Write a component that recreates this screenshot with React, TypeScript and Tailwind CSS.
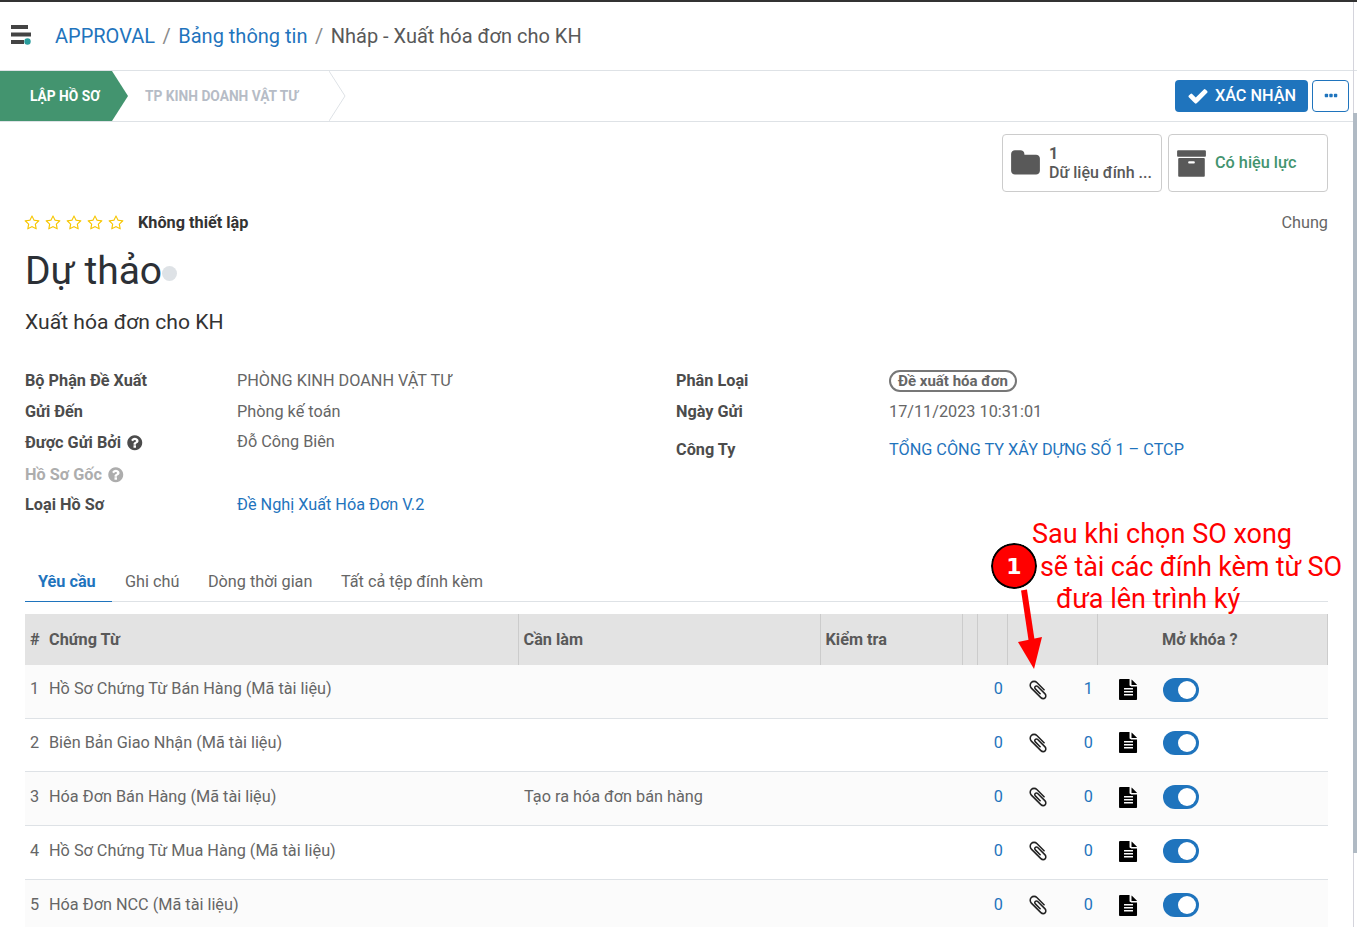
const ROWS = [
  { no: 1, name: "Hồ Sơ Chứng Từ Bán Hàng (Mã tài liệu)", todo: "", count: 1 },
  { no: 2, name: "Biên Bản Giao Nhận (Mã tài liệu)", todo: "", count: 0 },
  { no: 3, name: "Hóa Đơn Bán Hàng (Mã tài liệu)", todo: "Tạo ra hóa đơn bán hàng", count: 0 },
  { no: 4, name: "Hồ Sơ Chứng Từ Mua Hàng (Mã tài liệu)", todo: "", count: 0 },
  { no: 5, name: "Hóa Đơn NCC (Mã tài liệu)", todo: "", count: 0 },
];

// Font Awesome 4 glyphs, the set the page itself uses
const ICONS = {
  check: "M1671 566q0 40-28 68l-724 724-136 136q-28 28-68 28t-68-28l-136-136-362-362q-28-28-28-68t28-68l136-136q28-28 68-28t68 28l294 295 656-657q28-28 68-28t68 28l136 136q28 28 28 68z",
  dots: "M576 736v192q0 40-28 68t-68 28h-192q-40 0-68-28t-28-68v-192q0-40 28-68t68-28h192q40 0 68 28t28 68zm512 0v192q0 40-28 68t-68 28h-192q-40 0-68-28t-28-68v-192q0-40 28-68t68-28h192q40 0 68 28t28 68zm512 0v192q0 40-28 68t-68 28h-192q-40 0-68-28t-28-68v-192q0-40 28-68t68-28h192q40 0 68 28t28 68z",
  folder: "M1728 608v704q0 92-66 158t-158 66h-1216q-92 0-158-66t-66-158v-960q0-92 66-158t158-66h320q92 0 158 66t66 158v32h672q92 0 158 66t66 158z",
  archive: "M1088 832q0-26-19-45t-45-19h-256q-26 0-45 19t-19 45 19 45 45 19h256q26 0 45-19t19-45zm576-192v960q0 26-19 45t-45 19h-1408q-26 0-45-19t-19-45v-960q0-26 19-45t45-19h1408q26 0 45 19t19 45zm64-448v256q0 26-19 45t-45 19h-1536q-26 0-45-19t-19-45v-256q0-26 19-45t45-19h1536q26 0 45 19t19 45z",
  star: "M1201 1004l306-297-422-62-189-382-189 382-422 62 306 297-73 421 378-199 377 199zm527-357q0 22-26 48l-363 354 86 500q1 7 1 20 0 50-41 50-19 0-40-12l-449-236-449 236q-22 12-40 12-21 0-31.500-14.500t-10.500-35.500q0-6 2-20l86-500-364-354q-25-27-25-48 0-37 56-46l502-73 225-455q19-41 49-41t49 41l225 455 502 73q56 9 56 46z",
  help: "M1024 1376v-192q0-14-9-23t-23-9h-192q-14 0-23 9t-9 23v192q0 14 9 23t23 9h192q14 0 23-9t9-23zm256-672q0-88-55.500-163t-138.500-116-170-41q-243 0-371 213-15 24 8 42l132 100q7 6 19 6 16 0 25-12 53-68 86-92 34-24 86-24 48 0 85.500 26t37.500 59q0 38-20 61t-68 45q-63 28-115.500 86.500t-52.500 125.500v36q0 14 9 23t23 9h192q14 0 23-9t9-23q0-19 21.500-49.500t54.500-49.500q32-18 49-28.500t46-35 44.500-48 28-60.500 12.500-81zm384 192q0 209-103 385.500t-279.500 279.500-385.500 103-385.500-103-279.500-279.500-103-385.500 103-385.500 279.500-279.500 385.500-103 385.500 103 279.500 279.500 103 385.500z",
  clip: "M1596 1385q0 117-79 196t-196 79q-135 0-235-100l-777-776q-113-115-113-271 0-159 110-270t269-111q158 0 273 113l605 606q10 10 10 22 0 16-30.500 46.500t-46.500 30.500q-13 0-23-10l-606-607q-79-77-181-77-106 0-179 75t-73 181q0 105 76 181l776 777q63 63 145 63 64 0 106-42t42-106q0-82-63-145l-581-581q-26-24-60-24-29 0-48 19t-19 48q0 32 25 59l410 410q10 10 10 22 0 16-31 47t-47 31q-12 0-22-10l-410-410q-63-61-63-149 0-82 57-139t139-57q88 0 149 63l581 581q100 98 100 235z",
  file: "M1596 476q14 14 28 36h-472v-472q22 14 36 28zm-476 164h504v1056q0 40-28 68t-68 28h-1344q-40 0-68-28t-28-68v-1600q0-40 28-68t68-28h800v504q0 40 28 68t68 28zm160 736v-64q0-14-9-23t-23-9h-704q-14 0-23 9t-9 23v64q0 14 9 23t23 9h704q14 0 23-9t9-23zm0-256v-64q0-14-9-23t-23-9h-704q-14 0-23 9t-9 23v64q0 14 9 23t23 9h704q14 0 23-9t9-23zm0-256v-64q0-14-9-23t-23-9h-704q-14 0-23 9t-9 23v64q0 14 9 23t23 9h704q14 0 23-9t9-23z",
};

function Icon({ name, size, className }: { name: keyof typeof ICONS; size: number; className?: string }) {
  return (
    <svg width={size} height={size} viewBox="0 0 1792 1792" fill="currentColor" className={className}>
      <path d={ICONS[name]} />
    </svg>
  );
}

function Label({ children, help, faded }: { children: React.ReactNode; help?: boolean; faded?: boolean }) {
  return (
    <div className={`flex items-center gap-[5px] font-bold ${faded ? "text-[#adadad]" : "text-[#4c4c4c]"}`}>
      {children}
      {help && <Icon name="help" size={17.5} />}
    </div>
  );
}

function Toggle() {
  return (
    <div className="flex h-6 w-9 items-center justify-end rounded-full bg-[#1f74bd] pr-[3px]">
      <div className="h-[18px] w-[18px] rounded-full bg-white" />
    </div>
  );
}

export default function App() {
  return (
    <div className="relative h-[927px] overflow-hidden border-t-2 border-[#333] bg-white font-['Roboto',sans-serif] text-[16.25px] text-[#666]">
      <header className="flex h-[69px] items-center border-b border-[#dee2e6] pl-[11px]">
        <svg width="21" height="20" viewBox="0 0 21 20" className="mb-[3px]">
          <rect x="0" y="0" width="17" height="4" fill="#444" />
          <rect x="0" y="7.500" width="20" height="4" fill="#444" />
          <rect x="0" y="15" width="13" height="4" fill="#444" />
          <circle cx="16.500" cy="16.500" r="3.200" fill="#2a9d9d" />
        </svg>
        <nav className="ml-[23px] flex items-center text-xl text-[#595959]">
          <span className="text-[#1f74bd]">APPROVAL</span>
          <span className="mx-[7.500px] text-[#8a8a8a]">/</span>
          <span className="text-[#1f74bd]">Bảng thông tin</span>
          <span className="mx-[7.500px] text-[#8a8a8a]">/</span>
          <span>Nháp - Xuất hóa đơn cho KH</span>
        </nav>
      </header>

      <div className="flex h-[51px] items-center justify-between border-b border-[#dee2e6] pr-2">
        <div className="flex h-full items-center text-[13.750px] font-bold">
          <div className="flex h-full w-[128px] items-center bg-[#43946f] pl-[30px] text-white [clip-path:polygon(0_0,112px_0,100%_50%,112px_100%,0_100%)]">
            LẬP HỒ SƠ
          </div>
          <div className="-ml-[2px] flex h-full w-[220px] items-center pl-[19px] text-[#b6bcc6] [clip-path:polygon(0_0,204px_0,100%_50%,204px_100%,0_100%)]">
            TP KINH DOANH VẬT TƯ
          </div>
          <svg width="17" height="50" viewBox="0 0 17 50" className="-ml-[17px]">
            <path d="M0 0 L16 25 L0 50" fill="none" stroke="#dee2e6" />
          </svg>
        </div>
        <div className="flex items-center gap-1">
          <button className="flex h-8 w-[133px] items-center justify-center gap-[6px] rounded bg-[#1f74bd] font-medium text-white">
            <Icon name="check" size={22} />
            XÁC NHẬN
          </button>
          <button className="flex h-8 w-[37px] items-center justify-center rounded border border-[#1f74bd] text-[#1f74bd]">
            <Icon name="dots" size={16} />
          </button>
        </div>
      </div>

      <main className="px-[25px]">
        <div className="flex justify-end gap-[6px] pr-[4px] pt-3">
          <div className="flex h-[58px] w-40 items-center gap-2 rounded border border-[#ccc] pl-[7px] text-base font-medium leading-[19px] text-[#595959]">
            <Icon name="folder" size={31} />
            <div>
              <div className="font-bold">1</div>
              <div>Dữ liệu đính ...</div>
            </div>
          </div>
          <div className="flex h-[58px] w-40 items-center gap-2 rounded border border-[#ccc] pl-[7px] font-medium text-[#43946f]">
            <Icon name="archive" size={31} className="text-[#595959]" />
            Có hiệu lực
          </div>
        </div>

        <div className="mt-[19px] flex items-center justify-between pr-[4px]">
          <div className="flex items-center">
            <div className="-ml-px flex gap-[5px] text-[#f7c600]">
              {[0, 1, 2, 3, 4].map((i) => (
                <Icon key={i} name="star" size={16} />
              ))}
            </div>
            <span className="ml-[14px] font-bold text-[#333]">Không thiết lập</span>
          </div>
          <span>Chung</span>
        </div>

        <div className="mt-[8px] flex items-center">
          <h1 className="text-[39px] leading-[56px] text-[#2c3036]">Dự thảo</h1>
          <span className="mt-1 h-[15px] w-[15px] rounded-full bg-[#dee2e6]" />
        </div>
        <div className="mt-[9px] text-[21.125px] leading-7 text-[#333]">Xuất hóa đơn cho KH</div>

        <div className="mt-[29px] grid grid-cols-[212px_439px_213px_1fr]">
          <div className="flex h-[31px] items-center"><Label>Bộ Phận Đề Xuất</Label></div>
          <div className="flex h-[31px] items-center">PHÒNG KINH DOANH VẬT TƯ</div>
          <div className="flex h-[31px] items-center"><Label>Phân Loại</Label></div>
          <div className="flex h-[31px] items-center">
            <span className="rounded-full border-2 border-[#777] px-[7px] text-[15px] font-bold leading-[18px] text-[#666]">Đề xuất hóa đơn</span>
          </div>

          <div className="flex h-[31px] items-center"><Label>Gửi Đến</Label></div>
          <div className="flex h-[31px] items-center">Phòng kế toán</div>
          <div className="flex h-[31px] items-center"><Label>Ngày Gửi</Label></div>
          <div className="flex h-[31px] items-center">17/11/2023 10:31:01</div>

          <div className="flex h-[31px] items-center"><Label help>Được Gửi Bởi</Label></div>
          <div className="flex h-[31px] items-center pb-[2px]">Đỗ Công Biên</div>
          <div className="row-span-2 flex h-[45px] items-center"><Label>Công Ty</Label></div>
          <div className="row-span-2 flex h-[45px] items-center text-[#1f74bd]">TỔNG CÔNG TY XÂY DỰNG SỐ 1 – CTCP</div>

          <div className="flex h-[31px] items-center pt-[2px]"><Label help faded>Hồ Sơ Gốc</Label></div>
          <div />

          <div className="flex h-[31px] items-center"><Label>Loại Hồ Sơ</Label></div>
          <div className="flex h-[31px] items-center text-[#1f74bd]">Đề Nghị Xuất Hóa Đơn V.2</div>
        </div>

        <div className="mt-[42px] flex h-10 w-[1303px] border-b border-[#dee2e6]">
          <div className="-mb-px flex w-[87px] items-center border-b border-[#1f74bd] pl-[13px] font-bold text-[#1f74bd]">Yêu cầu</div>
          <div className="flex items-center pl-[13px]">Ghi chú</div>
          <div className="flex items-center pl-[28.500px]">Dòng thời gian</div>
          <div className="flex items-center pl-[28.500px]">Tất cả tệp đính kèm</div>
        </div>

        <table className="mt-3 w-[1303px] table-fixed border-collapse">
          <colgroup>
            <col className="w-[18px]" />
            <col className="w-[475px]" />
            <col className="w-[302px]" />
            <col className="w-[142px]" />
            <col className="w-[15px]" />
            <col className="w-[30px]" />
            <col className="w-[90px]" />
            <col className="w-[231px]" />
          </colgroup>
          <thead>
            <tr className="h-[51px] bg-[#e3e3e3] text-left font-bold text-[#595959]">
              <th className="pl-[5px]">#</th>
              <th className="pl-[6px]">Chứng Từ</th>
              <th className="border-l border-[#ccc] pl-[5px]">Cần làm</th>
              <th className="border-l border-[#ccc] pl-[5px]">Kiểm tra</th>
              <th className="border-l border-[#ccc]" />
              <th className="border-l border-[#ccc]" />
              <th className="border-l border-[#ccc]" />
              <th className="border-l border-[#ccc] pr-[26px] text-center shadow-[inset_-1px_0_0_#ccc]">Mở khóa ?</th>
            </tr>
          </thead>
          <tbody>
            {ROWS.map((row) => (
              <tr
                key={row.no}
                className={`border-b border-[#dee2e6] ${row.no < 3 ? "h-[53px] [&>td]:pb-[4px]" : "h-[54px] [&>td]:pb-[2px]"} ${row.no % 2 ? "bg-[#fbfbfb]" : "bg-white"}`}
              >
                <td className="pl-[5px]">{row.no}</td>
                <td className="pl-[6px]">{row.name}</td>
                <td className="pl-[6px]">{row.todo}</td>
                <td />
                <td />
                <td className="pr-[4px] text-right text-[#1f74bd]">0</td>
                <td className="text-[#1f74bd]">
                  <div className="flex items-center justify-between pl-[20px] pr-[4px]">
                    <Icon name="clip" size={22} className="text-[#222]" />
                    <span>{row.count}</span>
                  </div>
                </td>
                <td>
                  <div className="flex items-center pl-[21px]">
                    <Icon name="file" size={21} className="text-black" />
                    <div className="ml-[24px]"><Toggle /></div>
                  </div>
                </td>
              </tr>
            ))}
          </tbody>
        </table>
      </main>

      {/* scrollbar */}
      <div className="absolute bottom-0 right-0 top-0 w-1 border-l border-[#d4d4dc]" />
      <div className="absolute right-0 top-[111px] h-[740px] w-1 bg-[#b0bac4]" />

      {/* callout drawn on top of the screenshot */}
      <div className="absolute left-[1032px] top-[516px] text-[27px] leading-[32.600px] text-[#f00]">
        <div>Sau khi chọn SO xong</div>
        <div className="pl-2 tracking-[-0.150px]">sẽ tài các đính kèm từ SO</div>
        <div className="pl-6">đưa lên trình ký</div>
      </div>
      <div className="absolute left-[991px] top-[541px] flex h-[46px] w-[46px] items-center justify-center rounded-full border-2 border-black bg-[#f00] text-[22px] font-bold text-white outline outline-1 outline-white [font-family:'DejaVu_Sans',sans-serif]">
        1
      </div>
      <svg width="40" height="90" viewBox="0 0 40 90" className="absolute left-[1012px] top-[585px]">
        <path d="M12 3 L20 56" stroke="#f00" strokeWidth="6" fill="none" />
        <path d="M6 55 L30 50 L22 82 Z" fill="#f00" />
      </svg>
    </div>
  );
}
